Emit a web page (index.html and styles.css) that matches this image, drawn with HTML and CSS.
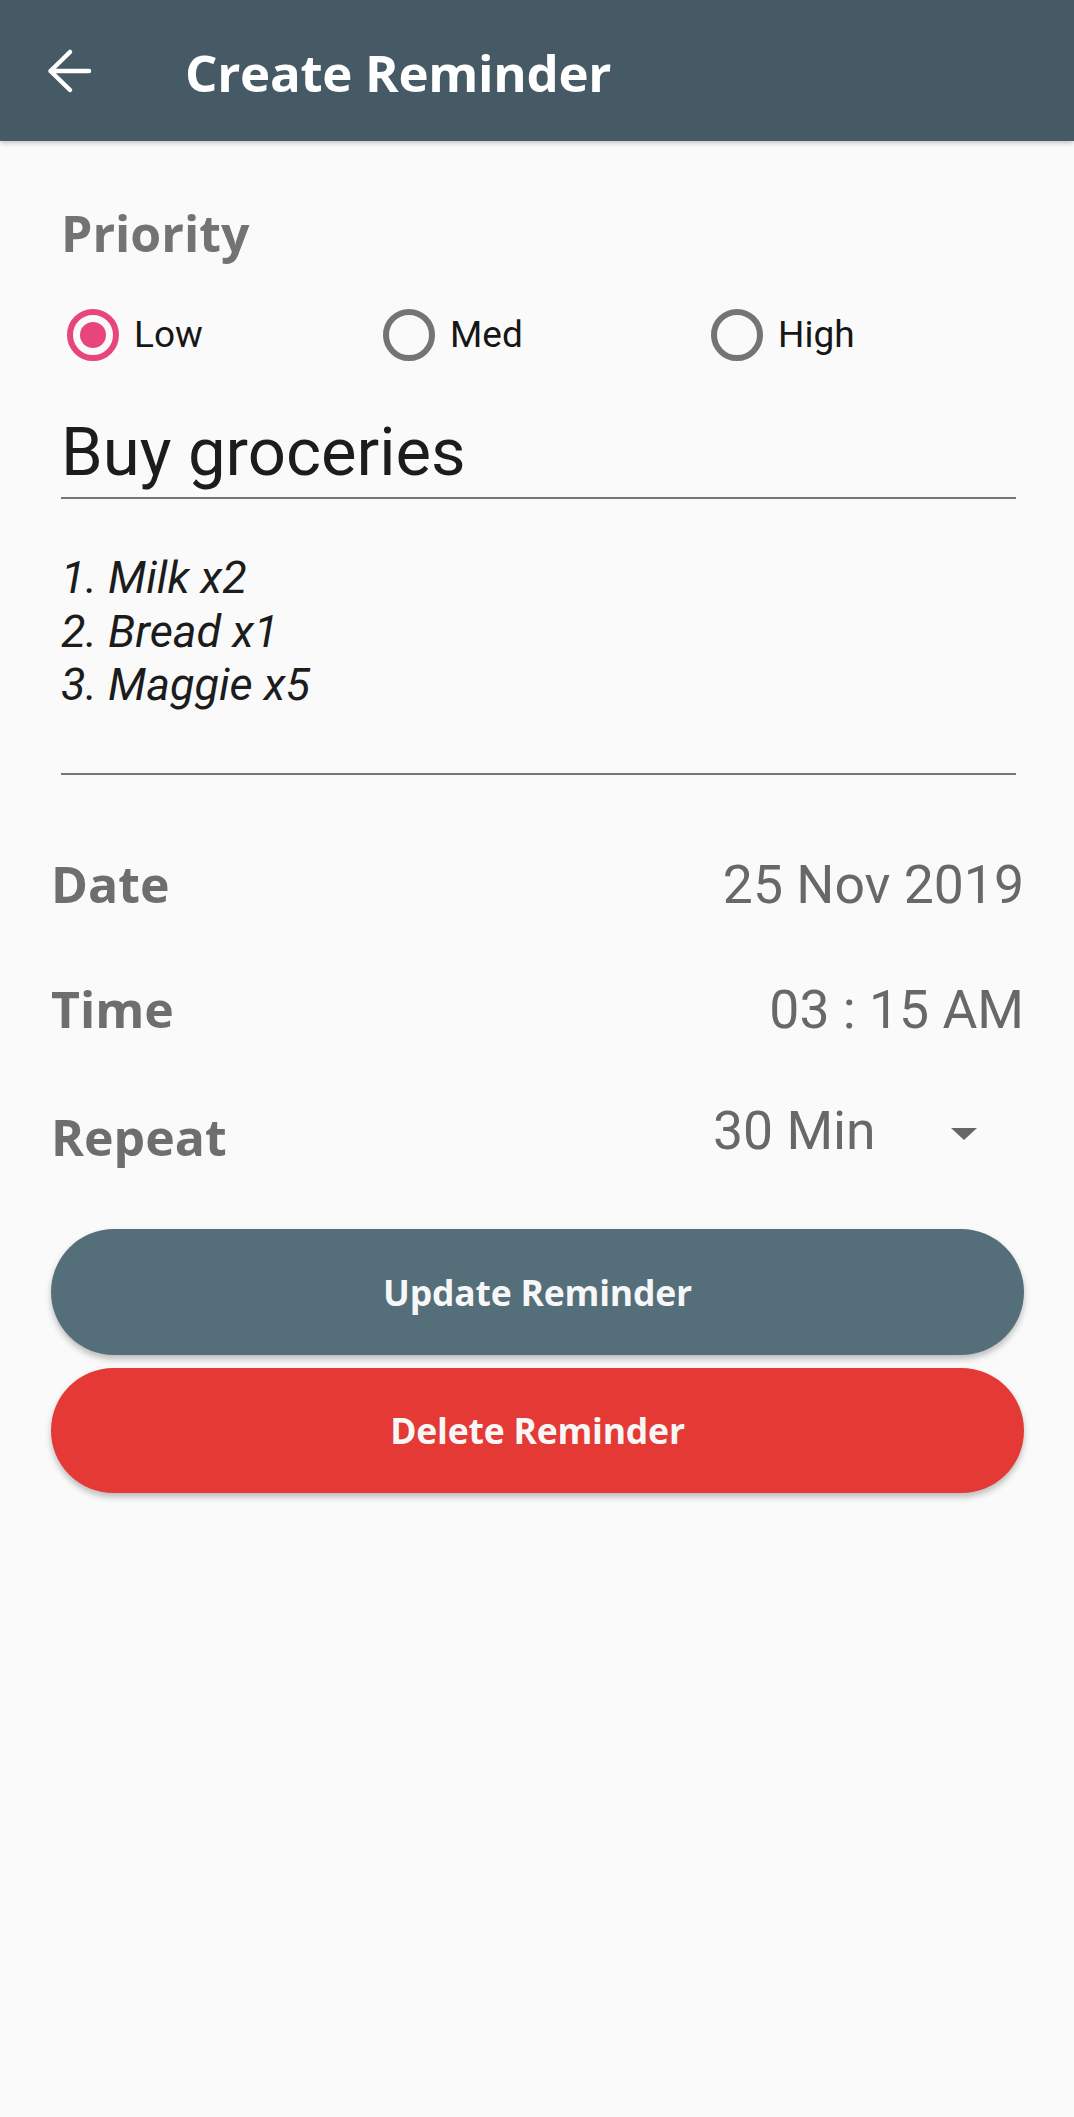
FILE: index.html
```html
<!DOCTYPE html>
<html lang="en">
<head>
<meta charset="utf-8">
<title>Create Reminder</title>
<link rel="stylesheet" href="styles.css">
</head>
<body>
<header class="appbar">
  <svg class="back" width="48" height="48" viewBox="0 0 48 48" aria-hidden="true">
    <path d="M43 24H4.5M24 5L4.5 24L24 43" fill="none" stroke="#ffffff" stroke-width="4.5" stroke-linecap="round" stroke-linejoin="round"/>
  </svg>
  <h1 class="title">Create Reminder</h1>
</header>
<main class="content">
  <section class="form">
    <h2 class="section-label">Priority</h2>
    <div class="radio-group">
      <div class="radio-item">
        <span class="radio checked"><span class="dot"></span></span>
        <span class="radio-text">Low</span>
      </div>
      <div class="radio-item">
        <span class="radio"></span>
        <span class="radio-text">Med</span>
      </div>
      <div class="radio-item">
        <span class="radio"></span>
        <span class="radio-text">High</span>
      </div>
    </div>
    <div class="title-field">Buy groceries</div>
    <div class="notes-field">
      <div>1. Milk x2</div>
      <div>2. Bread x1</div>
      <div>3. Maggie x5</div>
    </div>
  </section>

  <div class="row row-date">
    <span class="row-label">Date</span>
    <span class="row-value">25 Nov 2019</span>
  </div>
  <div class="row row-time">
    <span class="row-label">Time</span>
    <span class="row-value">03 : 15 AM</span>
  </div>
  <div class="row row-repeat">
    <span class="row-label">Repeat</span>
    <span class="spinner">
      <span class="spinner-text">30 Min</span>
      <span class="caret"></span>
    </span>
  </div>

  <button class="btn btn-update" type="button">Update Reminder</button>
  <button class="btn btn-delete" type="button">Delete Reminder</button>
</main>
</body>
</html>
```

FILE: styles.css
```css
* {
  box-sizing: border-box;
}

html,
body {
  margin: 0;
  padding: 0;
}

body {
  background: #fafafa;
  font-family: "Open Sans", "Noto Sans", sans-serif;
  min-height: 2117px;
}

/* App bar */
.appbar {
  height: 141px;
  background: #455a64;
  display: flex;
  align-items: center;
  padding-left: 46px;
  box-shadow: 0 2px 5px rgba(0, 0, 0, 0.22);
}

.back {
  display: block;
  flex: none;
}

.title {
  margin: 0 0 0 91px;
  padding-top: 4px;
  font-family: "Open Sans", sans-serif;
  font-weight: 700;
  font-size: 51px;
  line-height: 51px;
  color: #ffffff;
  letter-spacing: -0.3px;
}

/* Content */
.content {
  padding: 0 50px 0 51px;
}

.form {
  padding: 0 8px 0 10px;
}

.section-label {
  margin: 62px 0 0;
  font-family: "Open Sans", sans-serif;
  font-weight: 700;
  font-size: 50px;
  line-height: 60px;
  color: #737373;
}

.radio-group {
  margin: 46px 0 0 6px;
  display: grid;
  grid-template-columns: 316px 328px 1fr;
  height: 52px;
}

.radio-item {
  display: flex;
  align-items: center;
  gap: 15px;
}

.radio {
  width: 52px;
  height: 52px;
  border-radius: 50%;
  border: 6px solid #747474;
  display: flex;
  align-items: center;
  justify-content: center;
  flex: none;
}

.radio.checked {
  border-color: #e8467b;
}

.dot {
  width: 26px;
  height: 26px;
  border-radius: 50%;
  background: #e8467b;
}

.radio-text {
  font-family: Roboto, sans-serif;
  font-size: 37px;
  line-height: 52px;
  color: #161616;
}

.title-field {
  margin-top: 53px;
  font-family: Roboto, sans-serif;
  font-size: 67px;
  line-height: 76px;
  color: #1c1c1c;
  padding-bottom: 7px;
  border-bottom: 2px solid #777777;
}

.notes-field {
  margin-top: 52px;
  font-family: Roboto, sans-serif;
  font-style: italic;
  font-size: 45px;
  line-height: 53.5px;
  color: #1c1c1c;
  padding-bottom: 61px;
  border-bottom: 2px solid #777777;
}

/* Rows */
.row {
  display: flex;
  justify-content: space-between;
  align-items: baseline;
}

.row-date {
  margin-top: 79px;
}

.row-time {
  margin-top: 64px;
}

.row-repeat {
  margin-top: 67px;
}

.row-label {
  font-family: "Open Sans", sans-serif;
  font-weight: 700;
  font-size: 50px;
  line-height: 60px;
  color: #6e6e6e;
}

.row-value {
  font-family: Roboto, sans-serif;
  font-size: 53.5px;
  line-height: 60px;
  color: #686868;
  white-space: nowrap;
}

.spinner {
  flex: none;
  align-self: flex-start;
  margin-top: -6px;
  margin-right: 47px;
  display: flex;
  align-items: center;
  font-family: Roboto, sans-serif;
  font-size: 53.5px;
  line-height: 60px;
  color: #686868;
}

.spinner-text {
  width: 162px;
  white-space: nowrap;
}

.caret {
  flex: none;
  margin-left: 76px;
  margin-top: 6px;
  width: 0;
  height: 0;
  border-left: 13px solid transparent;
  border-right: 13px solid transparent;
  border-top: 12px solid #666666;
}

/* Buttons */
.btn {
  display: flex;
  align-items: center;
  justify-content: center;
  width: 973px;
  border: none;
  margin: 0;
  padding: 0;
  font-family: "Open Sans", sans-serif;
  font-weight: 700;
  font-size: 35.5px;
  color: #f7f7f7;
  letter-spacing: -0.2px;
  box-shadow: 0 4px 6px rgba(0, 0, 0, 0.25);
}

.btn-update {
  margin-top: 62px;
  height: 126px;
  border-radius: 63px;
  background: #546e7a;
}

.btn-delete {
  margin-top: 13px;
  height: 125px;
  border-radius: 63px;
  background: #e53935;
}
```
